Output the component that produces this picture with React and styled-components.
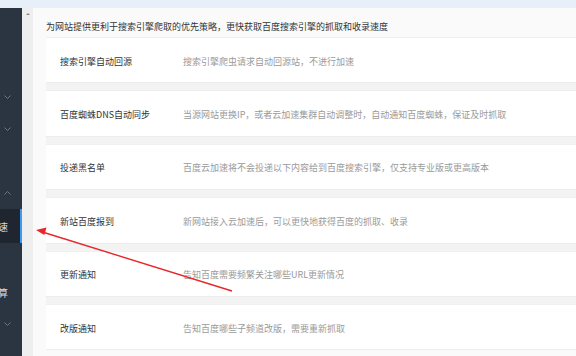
import React from "react";
import styled, { createGlobalStyle } from "styled-components";

const Global = createGlobalStyle`
  html, body {
    margin: 0;
    padding: 0;
    width: 576px;
    height: 356px;
    overflow: hidden;
    background: #fafafa;
    font-family: "Noto Sans CJK SC", "Noto Sans", sans-serif;
  }
`;

const Page = styled.div`
  position: relative;
  width: 576px;
  height: 356px;
  display: flex;
  flex-direction: column;
`;

const TopStrip = styled.div`
  height: 8px;
  background: #e7eff8;
`;

const Body = styled.div`
  flex: 1;
  display: flex;
  min-height: 0;
`;

const Sidebar = styled.div`
  width: 22px;
  background: #2b3441;
  overflow: hidden;
  display: flex;
  flex-direction: column;
  padding-top: 73px;
  box-sizing: border-box;
`;

const MenuRow = styled.div`
  height: ${(p) => p.h || 32}px;
  flex-shrink: 0;
  display: flex;
  align-items: center;
  justify-content: flex-end;
  padding-right: ${(p) => (p.icon ? 9 : 12)}px;
  box-sizing: border-box;
  background: ${(p) => (p.active ? "#1f2630" : "transparent")};
  border-right: 2px solid ${(p) => (p.active ? "#3a9bf4" : "transparent")};
  color: #d3d8df;
  font-size: 10px;
  white-space: nowrap;
`;

const Gutter = styled.div`
  width: 11px;
  background: #eeeeee;
  display: flex;
  justify-content: center;
  padding-top: 5px;
  box-sizing: border-box;
`;

const UpTriangle = styled.div`
  width: 0;
  height: 0;
  border-left: 2px solid transparent;
  border-right: 2px solid transparent;
  border-bottom: 2px solid #8a8a8a;
`;

const Main = styled.div`
  flex: 1;
  min-width: 0;
  padding-left: 13px;
  background: #fafafa;
  display: flex;
  flex-direction: column;
`;

const Heading = styled.div`
  margin-top: 9px;
  height: 20px;
  line-height: 20px;
  font-size: 9px;
  color: #333;
  white-space: nowrap;
`;

const List = styled.div`
  display: flex;
  flex-direction: column;
  gap: 7px;
  background: #f3f3f3;
`;

const Card = styled.div`
  height: 46.4px;
  background: #ffffff;
  border-top: 1px solid #f0f0f0;
  border-bottom: 1px solid #ececec;
  box-sizing: border-box;
  display: flex;
  align-items: center;
  padding-left: 14px;
  padding-top: 2px;
  font-size: 9px;
  white-space: nowrap;
`;

const Title = styled.div`
  width: 123px;
  flex-shrink: 0;
  color: #333;
`;

const Desc = styled.div`
  color: #9a9a9a;
`;

const ArrowLayer = styled.svg`
  position: absolute;
  left: 0;
  top: 0;
  pointer-events: none;
`;

function Chevron({ up }) {
  return (
    <svg width="7" height="4" viewBox="0 0 7 4">
      <polyline
        points={up ? "0.5,3.5 3.5,0.5 6.5,3.5" : "0.5,0.5 3.5,3.5 6.5,0.5"}
        fill="none"
        stroke="#6c7684"
        strokeWidth="1"
      />
    </svg>
  );
}

const items = [
  ["搜索引擎自动回源", "搜索引擎爬虫请求自动回源站，不进行加速"],
  ["百度蜘蛛DNS自动同步", "当源网站更换IP，或者云加速集群自动调整时，自动通知百度蜘蛛，保证及时抓取"],
  ["投递黑名单", "百度云加速将不会投递以下内容给到百度搜索引擎，仅支持专业版或更高版本"],
  ["新站百度报到", "新网站接入云加速后，可以更快地获得百度的抓取、收录"],
  ["更新通知", "告知百度需要频繁关注哪些URL更新情况"],
  ["改版通知", "告知百度哪些子频道改版，需要重新抓取"],
];

export default function App() {
  return (
    <Page>
      <Global />
      <TopStrip />
      <Body>
        <Sidebar>
          <MenuRow icon><Chevron /></MenuRow>
          <MenuRow icon><Chevron /></MenuRow>
          <MenuRow />
          <MenuRow icon><Chevron up /></MenuRow>
          <MenuRow active h={34}>百度云加速</MenuRow>
          <MenuRow h={33} />
          <MenuRow>边缘计算</MenuRow>
          <MenuRow icon><Chevron /></MenuRow>
        </Sidebar>
        <Gutter>
          <UpTriangle />
        </Gutter>
        <Main>
          <Heading>为网站提供更利于搜索引擎爬取的优先策略，更快获取百度搜索引擎的抓取和收录速度</Heading>
          <List>
            {items.map(([t, d]) => (
              <Card key={t}>
                <Title>{t}</Title>
                <Desc>{d}</Desc>
              </Card>
            ))}
          </List>
        </Main>
      </Body>
      <ArrowLayer width="576" height="356" viewBox="0 0 576 356">
        <line x1="232" y1="291" x2="44" y2="232.5" stroke="#e8262b" strokeWidth="1.4" />
        <polygon points="36,230 46.5,227.5 44.3,235" fill="#e8262b" />
      </ArrowLayer>
    </Page>
  );
}
